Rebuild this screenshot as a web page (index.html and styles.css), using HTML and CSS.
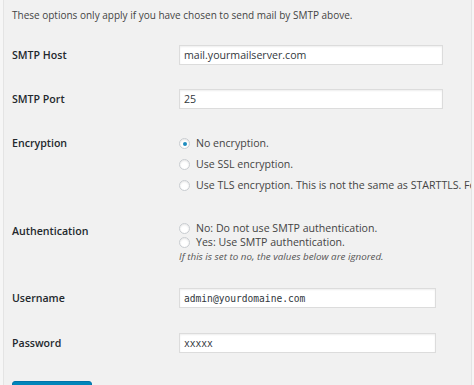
FILE: index.html
```html
<!DOCTYPE html>
<html>
<head>
    <title>SMTP Options</title>
    <link rel="stylesheet" href="styles.css">
</head>
<body>
    <div class="panel">
        <p class="desc">These options only apply if you have chosen to send mail by SMTP above.</p>

        <div class="row">
            <div class="label">SMTP Host</div>
            <div class="field"><input type="text" class="text wide" value="mail.yourmailserver.com"></div>
        </div>

        <div class="row">
            <div class="label">SMTP Port</div>
            <div class="field"><input type="text" class="text wide" value="25"></div>
        </div>

        <div class="row">
            <div class="label label-radio">Encryption</div>
            <div class="field">
                <label class="choice"><span class="radio checked"></span>No encryption.</label>
                <label class="choice"><span class="radio"></span>Use SSL encryption.</label>
                <label class="choice"><span class="radio"></span>Use TLS encryption. This is not the same as STARTTLS. For most servers SSL is the recommended option.</label>
            </div>
        </div>

        <div class="row row-auth">
            <div class="label label-auth">Authentication</div>
            <div class="field">
                <label class="choice tight"><span class="radio"></span>No: Do not use SMTP authentication.</label>
                <label class="choice tight"><span class="radio"></span>Yes: Use SMTP authentication.</label>
                <span class="note">If this is set to no, the values below are ignored.</span>
            </div>
        </div>

        <div class="row row-user">
            <div class="label">Username</div>
            <div class="field"><input type="text" class="text mono" value="admin@yourdomaine.com"></div>
        </div>

        <div class="row row-pass">
            <div class="label">Password</div>
            <div class="field"><input type="text" class="text mono" value="xxxxx"></div>
        </div>

        <button type="button" class="button-primary">Save Changes</button>
    </div>
</body>
</html>
```

FILE: styles.css
```css
html {
    overflow: hidden;
}

body {
    margin: 0;
    padding: 0 2px 0 3px;
    background-color: #f6f6f6;
    font-family: "Open Sans", "Liberation Sans", sans-serif;
    font-size: 10.6px;
    color: #444;
    height: 385px;
    overflow: hidden;
}

.panel {
    background-color: #f1f1f1;
    border-left: 1px solid #e4e4e4;
    border-right: 1px solid #e4e4e4;
    padding: 5px 0 0 8px;
    height: 385px;
    box-sizing: border-box;
    overflow: hidden;
}

.desc {
    margin: 0 0 8px 0;
    line-height: 20px;
    font-size: 10px;
    white-space: nowrap;
}

.row {
    display: flex;
    padding: 12px 0;
}

.label {
    width: 167px;
    flex: none;
    line-height: 20px;
    font-weight: 600;
    color: #23282d;
}

.label-radio {
    line-height: 21px;
}

.label-auth {
    padding-top: 3px;
    line-height: 14px;
}

.field {
    flex: 1;
    min-width: 0;
    white-space: nowrap;
    overflow: hidden;
}

.row-auth {
    padding-top: 13px;
}

.row-user {
    padding-top: 11px;
}

.row-pass {
    padding-top: 13px;
}

.text {
    display: block;
    height: 20px;
    box-sizing: border-box;
    margin: 0;
    padding: 0 4px;
    border: 1px solid #dcdcdc;
    background-color: #fff;
    box-shadow: inset 0 1px 2px rgba(0, 0, 0, 0.07);
    font-family: "Open Sans", "Liberation Sans", sans-serif;
    font-size: 10.6px;
    color: #32373c;
    outline: none;
}

.wide {
    width: 264px;
}

.mono {
    width: 257px;
    font-family: "DejaVu Sans Mono", "Liberation Mono", monospace;
    font-size: 9.6px;
}

.choice {
    display: flex;
    align-items: center;
    line-height: 21px;
}

.choice.tight {
    line-height: 14px;
}

.radio {
    display: inline-block;
    width: 11px;
    height: 11px;
    box-sizing: border-box;
    border: 1px solid #c8ccd0;
    border-radius: 50%;
    background-color: #fff;
    box-shadow: inset 0 1px 2px rgba(0, 0, 0, 0.1);
    margin: 0 6px 0 0;
    position: relative;
    flex: none;
}

.radio.checked::after {
    content: "";
    position: absolute;
    left: 2.5px;
    top: 2.5px;
    width: 4px;
    height: 4px;
    border-radius: 50%;
    background-color: #1e8cbe;
}

.note {
    display: block;
    line-height: 16px;
    font-style: italic;
    font-size: 9.8px;
    color: #555;
}

.button-primary {
    display: block;
    margin-top: 16px;
    width: 80px;
    height: 28px;
    border: 1px solid #0073aa;
    border-radius: 3px;
    background-color: #0085ba;
    color: #fff;
    font-family: "Open Sans", "Liberation Sans", sans-serif;
    font-size: 10.6px;
    padding: 0;
}
```
